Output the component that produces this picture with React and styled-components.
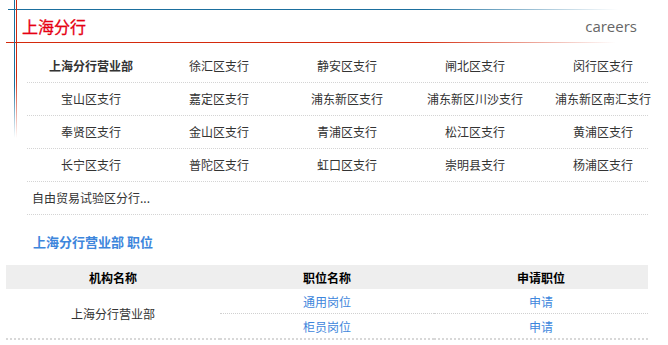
import React from "react";
import styled, { createGlobalStyle } from "styled-components";

const GlobalStyle = createGlobalStyle`
  body {
    margin: 0;
    background: #fff;
    font-family: "Microsoft YaHei", "Noto Sans CJK SC", "Noto Sans", sans-serif;
    font-size: 12px;
    color: #333;
  }
`;

const Page = styled.div`
  position: relative;
  width: 668px;
  height: 345px;
  overflow: hidden;

  &::before,
  &::after {
    content: "";
    position: absolute;
    top: 0;
    width: 1px;
    height: 138px;
  }
  &::before {
    left: 14px;
    background: linear-gradient(to bottom, #1b6f9e 0%, #1b6f9e 62%, rgba(27, 111, 158, 0) 100%);
  }
  &::after {
    left: 16px;
    background: linear-gradient(to bottom, #cf2a10 0%, #cf2a10 55%, rgba(207, 42, 16, 0) 100%);
  }
`;

const Rule = styled.div`
  height: 1px;
  margin-left: ${(p) => p.$indent}px;
  width: 610px;
  background: linear-gradient(
    to right,
    ${(p) => p.$color} 0%,
    ${(p) => p.$color} 68%,
    rgba(255, 255, 255, 0) 100%
  );
`;

const Header = styled.div`
  padding-top: 9px;
`;

const TitleBar = styled.div`
  display: flex;
  align-items: center;
  justify-content: space-between;
  height: 32px;
  padding: 0 31px 0 22px;
`;

const Title = styled.h1`
  margin: 0;
  font-size: 16px;
  line-height: 20px;
  font-weight: normal;
  color: #e60012;
  -webkit-text-stroke: 0.3px #e60012;
`;

const Careers = styled.span`
  font-family: "Open Sans", "Noto Sans", sans-serif;
  font-size: 15px;
  line-height: 20px;
  color: #666;
`;

const BranchList = styled.div`
  margin: 7px 0 0 27px;
  width: 621px;
`;

const BranchRow = styled.div`
  display: flex;
  height: 32px;
  border-bottom: 1px dotted #d4d4d4;
`;

const Branch = styled.a`
  flex: 0 0 128px;
  text-align: ${(p) => (p.$left ? "left" : "center")};
  padding-left: ${(p) => (p.$left ? "5px" : "0")};
  white-space: nowrap;
  line-height: 32px;
  font-size: 12px;
  color: #333;
  font-weight: ${(p) => (p.$bold ? "bold" : "normal")};
  text-decoration: none;
`;

const Subtitle = styled.h2`
  margin: 17px 0 0 33px;
  font-size: 13px;
  line-height: 20px;
  font-weight: bold;
  color: #3d86dc;
`;

const Table = styled.table`
  margin: 13px 0 0 6px;
  width: 642px;
  border-collapse: collapse;
  table-layout: fixed;
  font-size: 12px;
`;

const HeadCell = styled.th`
  height: 24px;
  padding: 0;
  background: #eeeeee;
  font-weight: bold;
  color: #000;
  text-align: center;
`;

const Cell = styled.td`
  height: 24px;
  padding: 0;
  text-align: center;
  color: #333;
  border-bottom: ${(p) => (p.$last ? "2px dotted #d8d8d8" : "1px dotted #d0d0d0")};
`;

const Link = styled.a`
  color: #3d86dc;
  text-decoration: none;
`;

const rows = [
  ["上海分行营业部", "徐汇区支行", "静安区支行", "闸北区支行", "闵行区支行"],
  ["宝山区支行", "嘉定区支行", "浦东新区支行", "浦东新区川沙支行", "浦东新区南汇支行"],
  ["奉贤区支行", "金山区支行", "青浦区支行", "松江区支行", "黄浦区支行"],
  ["长宁区支行", "普陀区支行", "虹口区支行", "崇明县支行", "杨浦区支行"],
];

export default function App() {
  return (
    <Page>
      <GlobalStyle />
      <Header>
        <Rule $indent={8} $color="#1b6f9e" />
        <TitleBar>
          <Title>上海分行</Title>
          <Careers>careers</Careers>
        </TitleBar>
        <Rule $indent={6} $color="#d42a0c" />
      </Header>

      <BranchList>
        {rows.map((row, i) => (
          <BranchRow key={i}>
            {row.map((name, j) => (
              <Branch key={name} $bold={i === 0 && j === 0}>
                {name}
              </Branch>
            ))}
          </BranchRow>
        ))}
        <BranchRow>
          <Branch $left>自由贸易试验区分行...</Branch>
        </BranchRow>
      </BranchList>

      <Subtitle>上海分行营业部 职位</Subtitle>

      <Table>
        <thead>
          <tr>
            <HeadCell>机构名称</HeadCell>
            <HeadCell>职位名称</HeadCell>
            <HeadCell>申请职位</HeadCell>
          </tr>
        </thead>
        <tbody>
          <tr>
            <Cell rowSpan={2} $last>
              上海分行营业部
            </Cell>
            <Cell>
              <Link>通用岗位</Link>
            </Cell>
            <Cell>
              <Link>申请</Link>
            </Cell>
          </tr>
          <tr>
            <Cell $last>
              <Link>柜员岗位</Link>
            </Cell>
            <Cell $last>
              <Link>申请</Link>
            </Cell>
          </tr>
        </tbody>
      </Table>
    </Page>
  );
}
